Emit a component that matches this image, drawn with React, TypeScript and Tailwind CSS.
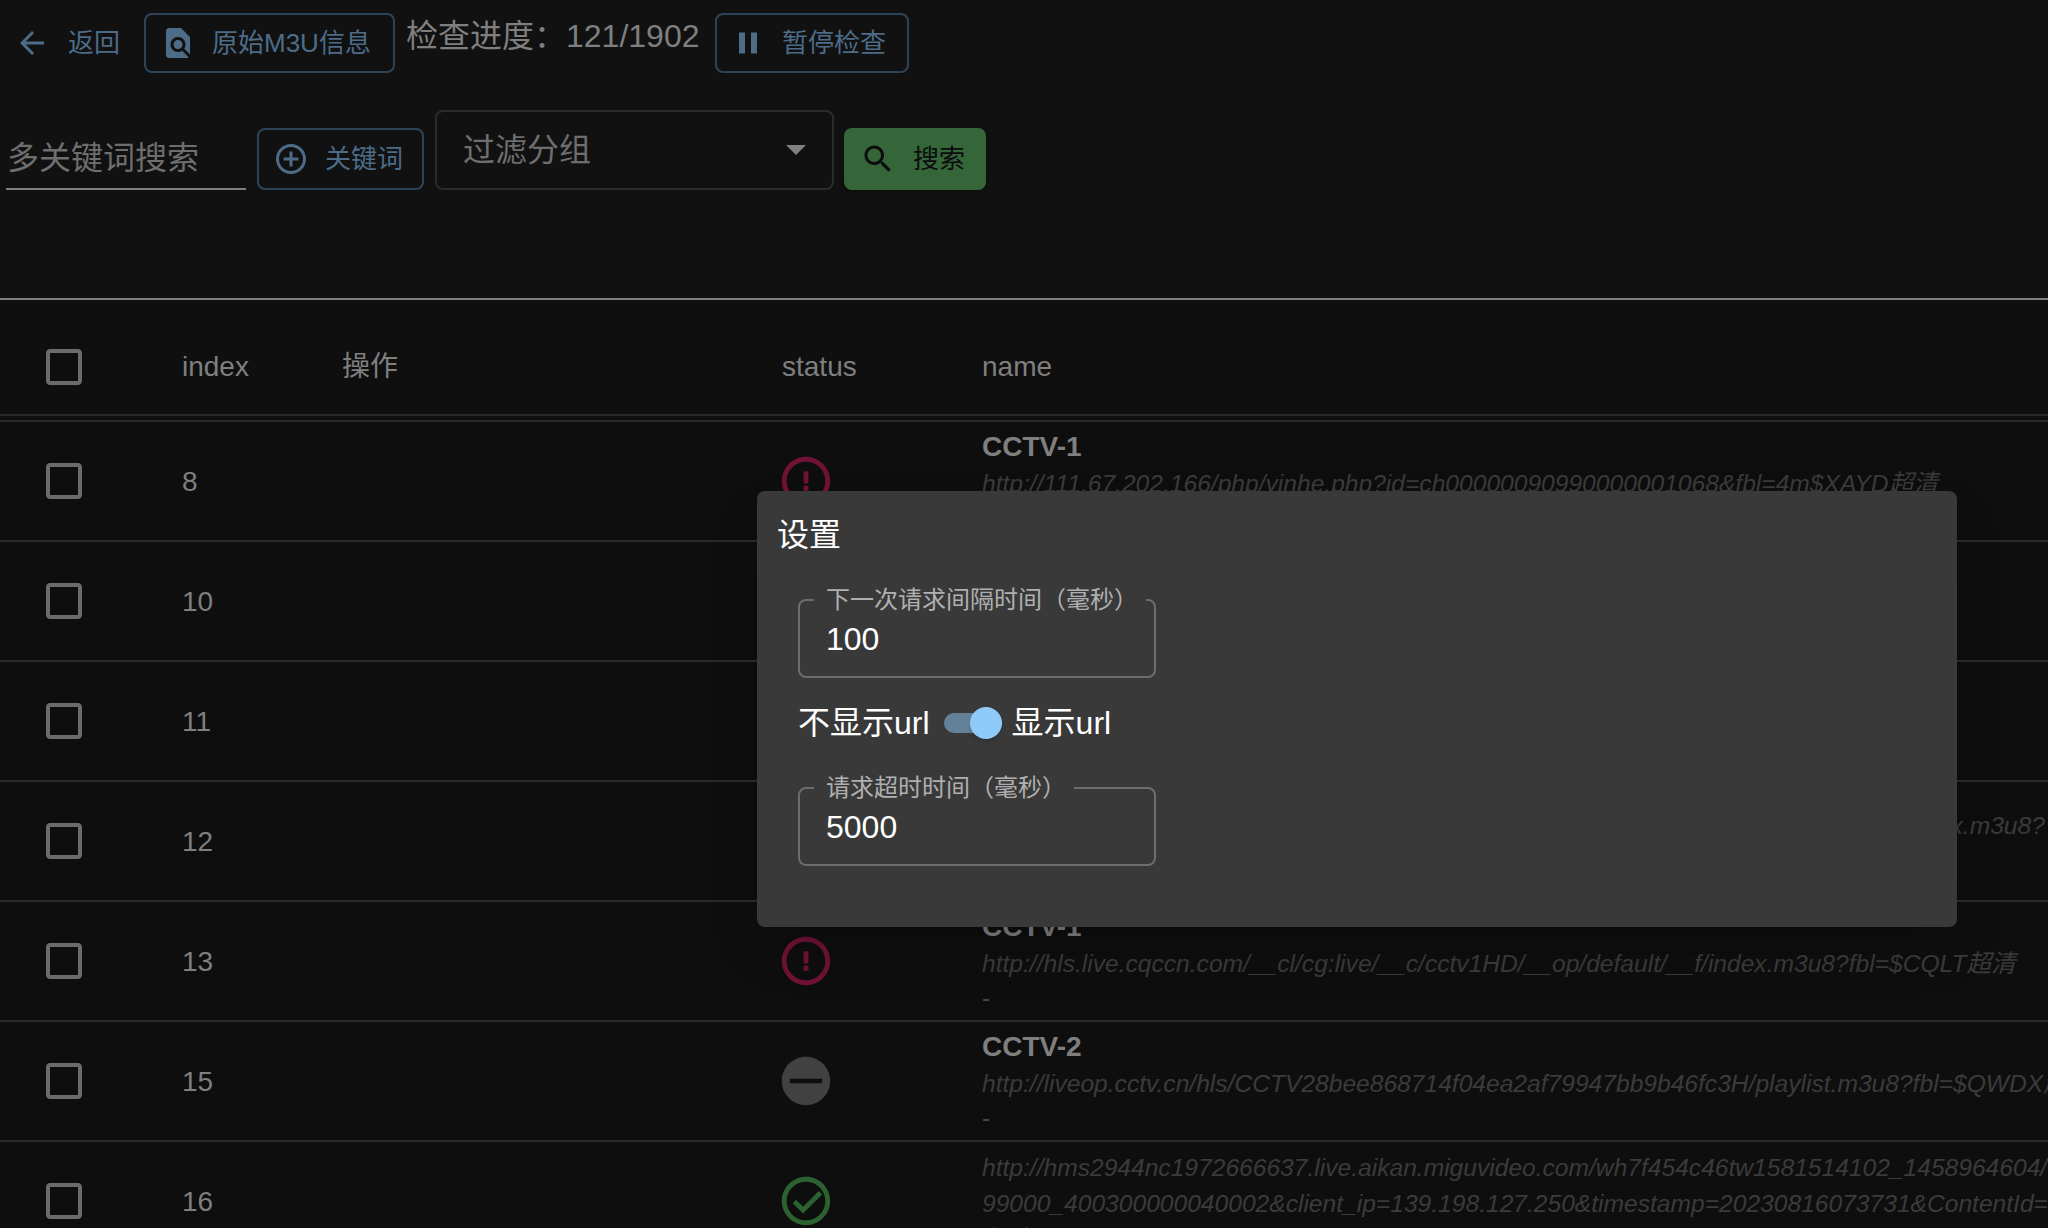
import React from 'react';

type Row = {
    index: number;
    status: 'error' | 'pending' | 'ok';
    name: string;
    urls: string[];
};

const rows: Row[] = [
    { index: 8, status: 'error', name: 'CCTV-1', urls: ['http://111.67.202.166/php/yinhe.php?id=ch00000090990000001068&fbl=4m$XAYD超清'] },
    { index: 10, status: 'error', name: 'CCTV-1', urls: ['http://111.67.202.166/php/yinhe.php?id=ch00000090990000001068'] },
    { index: 11, status: 'error', name: 'CCTV-1', urls: ['http://111.67.202.166/php/yinhe.php?id=ch00000090990000001068'] },
    {
        index: 12,
        status: 'error',
        name: 'CCTV-1',
        urls: ['http://dbiptv.sn.chinamobile.com/PLTV/88888890/224/3221226231/2/1000/1600/250/index.m3u8?', 'fbl='],
    },
    { index: 13, status: 'error', name: 'CCTV-1', urls: ['http://hls.live.cqccn.com/__cl/cg:live/__c/cctv1HD/__op/default/__f/index.m3u8?fbl=$CQLT超清'] },
    { index: 15, status: 'pending', name: 'CCTV-2', urls: ['http://liveop.cctv.cn/hls/CCTV28bee868714f04ea2af79947bb9b46fc3H/playlist.m3u8?fbl=$QWDX超清'] },
    {
        index: 16,
        status: 'ok',
        name: 'CCTV-2',
        urls: [
            'http://hms2944nc1972666637.live.aikan.miguvideo.com/wh7f454c46tw1581514102_1458964604/',
            '99000_400300000040002&client_ip=139.198.127.250&timestamp=20230816073731&ContentId=',
            '超清',
        ],
    },
];

const Icon = ({ d, className }: { d: string; className: string }) => (
    <svg className={className} viewBox="0 0 24 24" fill="currentColor" aria-hidden="true">
        <path d={d} />
    </svg>
);

const paths = {
    back: 'M20 11H7.83l5.59-5.59L12 4l-8 8 8 8 1.41-1.41L7.83 13H20v-2z',
    findInPage: 'M20 19.59V8l-6-6H6c-1.1 0-1.99.9-1.99 2L4 20c0 1.1.89 2 1.99 2H18c.45 0 .85-.15 1.19-.4l-4.43-4.43c-.8.52-1.74.83-2.76.83-2.76 0-5-2.24-5-5s2.24-5 5-5 5 2.24 5 5c0 1.02-.31 1.96-.83 2.75L20 19.59zM9 13c0 1.66 1.34 3 3 3s3-1.34 3-3-1.34-3-3-3-3 1.34-3 3z',
    pause: 'M6 19h4V5H6v14zm8-14v14h4V5h-4z',
    add: 'M13 7h-2v4H7v2h4v4h2v-4h4v-2h-4V7zm-1-5C6.48 2 2 6.48 2 12s4.48 10 10 10 10-4.48 10-10S17.52 2 12 2zm0 18c-4.41 0-8-3.59-8-8s3.59-8 8-8 8 3.59 8 8-3.59 8-8 8z',
    search: 'M15.5 14h-.79l-.28-.27C15.41 12.59 16 11.11 16 9.5 16 5.91 13.09 3 9.5 3S3 5.91 3 9.5 5.91 16 9.5 16c1.61 0 3.09-.59 4.23-1.57l.27.28v.79l5 4.99L20.49 19l-4.99-5zm-6 0C7.01 14 5 11.99 5 9.5S7.01 5 9.5 5 14 7.01 14 9.5 11.99 14 9.5 14z',
    checkbox: 'M19 5v14H5V5h14m0-2H5c-1.1 0-2 .9-2 2v14c0 1.1.9 2 2 2h14c1.1 0 2-.9 2-2V5c0-1.1-.9-2-2-2z',
    error: 'M11 8h2v5h-2zm0 6h2v2h-2zm.99-12C6.47 2 2 6.48 2 12s4.47 10 9.99 10C17.52 22 22 17.52 22 12S17.52 2 11.99 2zM12 20c-4.42 0-8-3.58-8-8s3.58-8 8-8 8 3.58 8 8-3.58 8-8 8z',
    pending: 'M12 2C6.48 2 2 6.48 2 12s4.48 10 10 10 10-4.48 10-10S17.52 2 12 2zm6.67 10.9H5.33v-1.8h13.34v1.8z',
    ok: 'M17.3 7.9 10.8 14.4 7.9 11.5 6.5 12.9l4.3 4.3 7.9-7.9zM12 2C6.48 2 2 6.48 2 12s4.48 10 10 10 10-4.48 10-10S17.52 2 12 2zm0 18c-4.42 0-8-3.58-8-8s3.58-8 8-8 8 3.58 8 8-3.58 8-8 8z',
};

const StatusIcon = ({ status }: { status: Row['status'] }) => {
    if (status === 'error') return <Icon d={paths.error} className="w-[58px] h-[58px] text-[#701236]" />;
    if (status === 'pending') return <Icon d={paths.pending} className="w-[58px] h-[58px] text-[#414141]" />;
    return <Icon d={paths.ok} className="w-[58px] h-[58px] text-[#2c6130]" />;
};

const Field = ({ label, value }: { label: string; value: string }) => (
    <fieldset className="w-[358px] h-[93px] border-2 border-[#6d6d6d] rounded-lg p-0 m-0">
        <legend className="ml-[14px] pl-[12px] pr-[8px] text-[24px] leading-[30px] whitespace-nowrap text-[#b0b0b0]">{label}</legend>
        <input
            readOnly
            value={value}
            className="block w-full pl-[26px] bg-transparent text-[32px] leading-[44px] text-white outline-none mt-[2px]"
        />
    </fieldset>
);

export default function App() {
    return (
        <div className="relative h-[1228px] overflow-hidden bg-[#111111] font-['Liberation_Sans','Noto_Sans_CJK_SC',sans-serif] text-[#7f7f7f]">
            <div className="h-[298px]">
                <div className="flex items-start pt-[13px] h-[110px]">
                    <button className="flex items-center h-[60px] pl-[14px] w-[144px] text-[26px] text-[#4c6c88]">
                        <Icon d={paths.back} className="w-[36px] h-[36px] shrink-0" />
                        <span className="ml-[18px]">返回</span>
                    </button>
                    <button className="flex items-center h-[60px] w-[251px] pl-[14px] border-2 border-[#2d4458] rounded-lg text-[26px] text-[#4c6c88] whitespace-nowrap">
                        <Icon d={paths.findInPage} className="w-[36px] h-[36px] shrink-0" />
                        <span className="ml-[16px]">原始M3U信息</span>
                    </button>
                    <div className="ml-[11px] text-[32px] leading-[46px] whitespace-nowrap w-[309px]">检查进度：121/1902</div>
                    <button className="flex items-center h-[60px] w-[194px] pl-[13px] border-2 border-[#2d4458] rounded-lg text-[26px] text-[#4c6c88]">
                        <Icon d={paths.pause} className="w-[36px] h-[36px] shrink-0" />
                        <span className="ml-[16px]">暂停检查</span>
                    </button>
                </div>
                <div className="flex items-end h-[80px] pl-[6px]">
                    <div className="w-[240px] h-[62px] border-b-2 border-[#808080]">
                        <input
                            readOnly
                            placeholder="多关键词搜索"
                            className="block w-full h-[60px] pl-[1px] bg-transparent text-[32px] placeholder:text-[#6e6e6e] outline-none"
                        />
                    </div>
                    <button className="flex items-center h-[62px] w-[167px] ml-[11px] pl-[14px] border-2 border-[#2d4458] rounded-lg text-[26px] text-[#4c6c88]">
                        <Icon d={paths.add} className="w-[36px] h-[36px] shrink-0" />
                        <span className="ml-[16px]">关键词</span>
                    </button>
                    <div className="flex items-center justify-between w-[399px] h-[80px] ml-[11px] pl-[26px] pr-[26px] border-2 border-[#2b2b2b] rounded-lg text-[32px] text-[#6e6e6e]">
                        <span>过滤分组</span>
                        <div className="w-0 h-0 border-x-[10px] border-x-transparent border-t-[10px] border-t-[#808080]" />
                    </div>
                    <button className="flex items-center h-[62px] w-[142px] ml-[10px] pl-[16px] bg-[#35663a] rounded-lg shadow-md text-[26px] text-[#0c0c0c]">
                        <Icon d={paths.search} className="w-[36px] h-[36px] shrink-0" />
                        <span className="ml-[17px]">搜索</span>
                    </button>
                </div>
            </div>

            <div className="h-[2px] bg-[#7f7f7f]" />

            <div className="grid grid-cols-[182px_160px_440px_200px_1fr] items-center h-[116px] pt-[20px] border-b-2 border-[#2a2a2a] bg-[#0f0f0f] text-[28px]">
                <Icon d={paths.checkbox} className="w-[48px] h-[48px] ml-[40px] text-[#6b6b6b]" />
                <div>index</div>
                <div>操作</div>
                <div>status</div>
                <div>name</div>
            </div>
            <div className="h-[4px] bg-[#0f0f0f]" />

            <div className="border-t-2 border-[#2a2a2a] bg-[#0e0e0e]">
                {rows.map((row) => (
                    <div
                        key={row.index}
                        className="grid grid-cols-[182px_160px_440px_200px_1fr] grid-rows-[118px] items-center h-[120px] border-b-2 border-[#2a2a2a] overflow-hidden"
                    >
                        <Icon d={paths.checkbox} className="w-[48px] h-[48px] ml-[40px] text-[#6b6b6b]" />
                        <div className="text-[28px] pt-[2px]">{row.index}</div>
                        <div />
                        <div className="-ml-[5px]">
                            <StatusIcon status={row.status} />
                        </div>
                        <div className="min-w-0 whitespace-nowrap">
                            <div className="text-[28px] leading-[38px] font-bold">{row.name}</div>
                            {row.urls.map((url, i) => (
                                <div key={i} className="text-[24.6px] leading-[36px] italic text-[#3b3b3b]">{url}</div>
                            ))}
                            <div className="text-[24px] leading-[32px] text-[#4a4a4a]">-</div>
                        </div>
                    </div>
                ))}
            </div>

            {/* settings dialog */}
            <div className="absolute left-[757px] top-[491px] w-[1200px] h-[436px] bg-[#393939] rounded-lg shadow-2xl pt-[20px] text-white">
                <div className="pl-[20px] text-[32px] leading-[48px]">设置</div>
                <div className="pl-[41px] mt-[26px]">
                    <Field label="下一次请求间隔时间（毫秒）" value="100" />
                    <div className="flex items-center h-[40px] mt-[25px] mb-[30px] text-[32px]">
                        <span>不显示url</span>
                        <div className="relative w-[58px] h-[20px] ml-[14px] mr-[10px] rounded-full bg-[#64819a]">
                            <div className="absolute right-0 top-[-6px] w-[32px] h-[32px] rounded-full bg-[#90caf9] shadow-md" />
                        </div>
                        <span>显示url</span>
                    </div>
                    <Field label="请求超时时间（毫秒）" value="5000" />
                </div>
            </div>
        </div>
    );
}
